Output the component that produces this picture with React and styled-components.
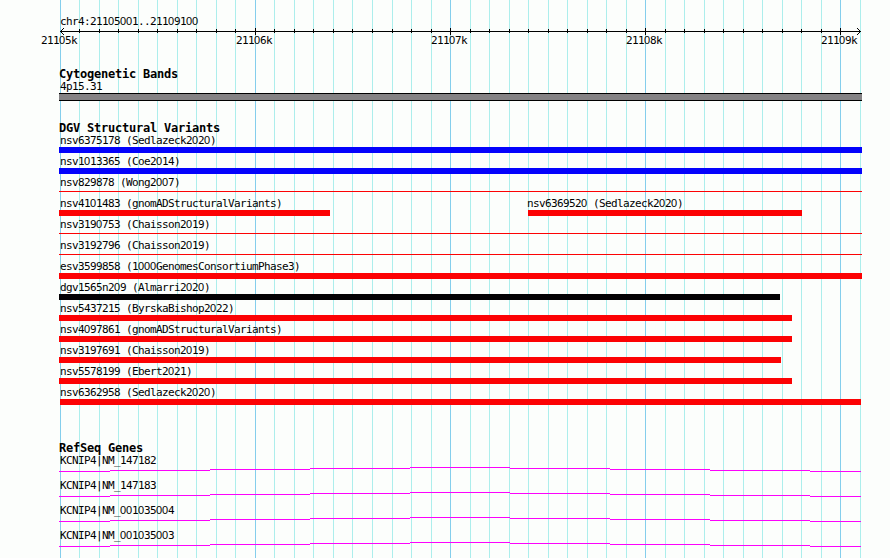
import React from 'react';
import styled, { createGlobalStyle } from 'styled-components';

const GlobalStyle = createGlobalStyle`
  body { margin: 0; background: #fcfefc; }
`;

const Page = styled.main`
  position: relative;
  box-sizing: border-box;
  width: 890px;
  height: 558px;
  overflow: hidden;
  padding-top: 14px;
  background: #fcfefc;
  color: #000;
  font: 11px/16px 'DejaVu Sans Mono', monospace;
  letter-spacing: -0.622px;
  white-space: pre;
`;

const GridLines = styled.svg`
  position: absolute;
  inset: 0;
`;

const Content = styled.div`
  position: relative;
  display: flex;
  flex-direction: column;
`;

const Zero = styled.span`
  font-family: 'Liberation Sans', sans-serif;
  letter-spacing: -0.117px;
  line-height: 1;
`;

const Location = styled.div`
  height: 14px;
  padding-left: 60px;
`;

const Axis = styled.svg`
  display: block;
  height: 7px;
`;

const Scale = styled.div`
  display: flex;
  gap: 159px;
  height: 32px;
  margin-left: 41px;
  line-height: 12px;
`;

const ScaleLabel = styled.span`
  width: 36px;
`;

const Section = styled.section`
  height: ${(p) => p.$height}px;
`;

const Title = styled.h2`
  margin: 0;
  padding-left: 59px;
  height: 12px;
  font: bold 12px/15px 'DejaVu Sans Mono', monospace;
  letter-spacing: -0.225px;
`;

const Row = styled.div`
  display: flex;
  height: ${(p) => p.$height}px;
`;

const Feature = styled.div`
  width: ${(p) => p.$width}px;
  margin-left: ${(p) => p.$gap}px;
`;

const Label = styled.div`
  height: 14px;
  margin-left: ${(p) => p.$inset ?? 1}px;
`;

const Bar = styled.div`
  height: ${(p) => (p.$thin ? 1 : 6)}px;
  margin-top: ${(p) => (p.$thin ? 2 : 0)}px;
  background: ${(p) => p.$color};
`;

const Band = styled.div`
  box-sizing: border-box;
  height: 8px;
  border: solid #000;
  border-width: 1px 0;
  background: #848284;
`;

const Transcript = styled.svg`
  display: block;
  height: 5px;
`;

const gridX = Array.from({ length: 42 }, (_, k) => Math.round(59.8 + k * 19.512));

const scale = ['21105k', '21106k', '21107k', '21108k', '21109k'];

const RED = '#fc0204';
const BLUE = '#0402fc';
const BLACK = '#040204';

const variants = [
  [{ name: 'nsv6375178 (Sedlazeck2020)', start: 59, end: 862, color: BLUE }],
  [{ name: 'nsv1013365 (Coe2014)', start: 59, end: 862, color: BLUE }],
  [{ name: 'nsv829878 (Wong2007)', start: 59, end: 862, color: RED, thin: true }],
  [
    { name: 'nsv4101483 (gnomADStructuralVariants)', start: 59, end: 330, color: RED },
    { name: 'nsv6369520 (Sedlazeck2020)', start: 528, end: 802, color: RED, inset: -1 },
  ],
  [{ name: 'nsv3190753 (Chaisson2019)', start: 59, end: 862, color: RED, thin: true }],
  [{ name: 'nsv3192796 (Chaisson2019)', start: 59, end: 862, color: RED, thin: true }],
  [{ name: 'esv3599858 (1000GenomesConsortiumPhase3)', start: 59, end: 862, color: RED }],
  [{ name: 'dgv1565n209 (Almarri2020)', start: 59, end: 780, color: BLACK }],
  [{ name: 'nsv5437215 (ByrskaBishop2022)', start: 59, end: 792, color: RED }],
  [{ name: 'nsv4097861 (gnomADStructuralVariants)', start: 59, end: 792, color: RED }],
  [{ name: 'nsv3197691 (Chaisson2019)', start: 59, end: 781, color: RED }],
  [{ name: 'nsv5578199 (Ebert2021)', start: 59, end: 792, color: RED }],
  [{ name: 'nsv6362958 (Sedlazeck2020)', start: 60, end: 861, color: RED, inset: 0 }],
];

const genes = ['KCNIP4|NM_147182', 'KCNIP4|NM_147183', 'KCNIP4|NM_001035004', 'KCNIP4|NM_001035003'];

// Draws zeros from the sans face, whose zero has no inner dot.
function PlainZeros({ children }) {
  return children.split(/(0+)/).map((part, i) => (i % 2 ? <Zero key={i}>{part}</Zero> : part));
}

function VariantRow({ items }) {
  return (
    <Row $height={21}>
      {items.map((v, i) => (
        <Feature key={v.name} $width={v.end - v.start} $gap={v.start - (i ? items[i - 1].end : 0)}>
          <Label $inset={v.inset}><PlainZeros>{v.name}</PlainZeros></Label>
          <Bar $color={v.color} $thin={v.thin} />
        </Feature>
      ))}
    </Row>
  );
}

export default function App() {
  return (
    <Page>
      <GlobalStyle />
      <GridLines width="890" height="558" shapeRendering="crispEdges">
        {gridX.map((x, k) => (
          <rect key={x} x={x} y="0" width="1" height="558" fill={k % 10 ? '#aceeec' : '#84ceec'} />
        ))}
      </GridLines>
      <Content>
        <Location><PlainZeros>chr4:21105001..21109100</PlainZeros></Location>
        <Axis width="890" height="7" shapeRendering="crispEdges">
          <rect x="60" y="3" width="801" height="1" />
          {gridX.slice(1, 41).map((x, i) => {
            const major = (i + 1) % 10 === 0;
            return <rect key={x} x={x} y={major ? 0 : 1} width="1" height={major ? 7 : 4} />;
          })}
          {[1, 2, 3].map((d) => (
            <g key={d}>
              <rect x={60 + d} y={3 - d} width="1" height="1" />
              <rect x={60 + d} y={3 + d} width="1" height="1" />
              <rect x={860 - d} y={3 - d} width="1" height="1" />
              <rect x={860 - d} y={3 + d} width="1" height="1" />
            </g>
          ))}
        </Axis>
        <Scale>
          {scale.map((s) => <ScaleLabel key={s}><PlainZeros>{s}</PlainZeros></ScaleLabel>)}
        </Scale>
        <Section $height={54}>
          <Title>Cytogenetic Bands</Title>
          <Row $height={22}>
            <Feature $width={803} $gap={59}>
              <Label>4p15.31</Label>
              <Band />
            </Feature>
          </Row>
        </Section>
        <Section $height={320}>
          <Title>DGV Structural Variants</Title>
          {variants.map((items) => <VariantRow key={items[0].name} items={items} />)}
        </Section>
        <Section $height={112}>
          <Title>RefSeq Genes</Title>
          {genes.map((g) => (
            <Row key={g} $height={25}>
              <Feature $width={802} $gap={59}>
                <Label><PlainZeros>{g}</PlainZeros></Label>
                <Transcript width="802" height="5" shapeRendering="crispEdges">
                  {[4, 3, 2, 1, 0, 1, 2, 3, 4].map((y, i) => {
                    const x = i ? i * 100 - 49 : 0;
                    return <rect key={i} x={x} y={y} width={i ? Math.min(100, 802 - x) : 51} height="1" fill="#fc02fc" />;
                  })}
                </Transcript>
              </Feature>
            </Row>
          ))}
        </Section>
      </Content>
    </Page>
  );
}
